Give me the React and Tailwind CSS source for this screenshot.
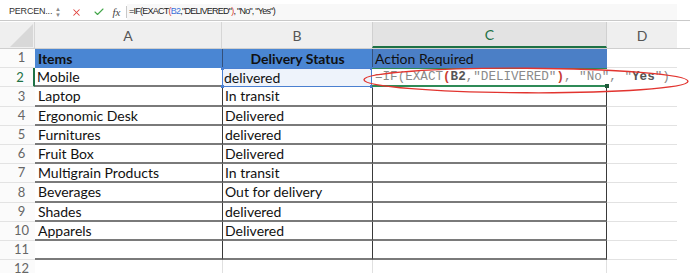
import React from "react";
import { X, Check } from "lucide-react";

const data = [
  ["Laptop", "In transit"],
  ["Ergonomic Desk", "Delivered"],
  ["Furnitures", "delivered"],
  ["Fruit Box", "Delivered"],
  ["Multigrain Products", "In transit"],
  ["Beverages", "Out for delivery"],
  ["Shades", "delivered"],
  ["Apparels", "Delivered"],
  ["", ""],
];

function RowNum({ n, active }) {
  return (
    <div
      className={
        active
          ? "w-[35px] shrink-0 h-full flex items-center justify-center pl-[7px] text-[13px] text-[#1e7145] border-r-2 border-r-[#1e7145] border-b border-b-[#e3e3e3] bg-[#fbfbfb]"
          : "w-[35px] shrink-0 h-full flex items-center justify-center pl-[8px] text-[13px] text-[#666] border-b border-b-[#e3e3e3] bg-[#fbfbfb]"
      }
    >
      {n}
    </div>
  );
}

function FormulaBar() {
  return (
    <div className="flex items-center h-[16px] bg-white font-['Liberation_Sans',sans-serif]">
      <div className="w-[62px] shrink-0 flex items-center pl-[9px] h-full">
        <span className="text-[9px] text-[#333] tracking-[-0.2px]">PERCEN...</span>
        <div className="ml-auto mr-[1px] flex flex-col items-center leading-none text-[#8a8a8a]">
          <span className="text-[6px] leading-[6px]">▲</span>
          <span className="text-[6px] leading-[6px]">▼</span>
        </div>
      </div>
      <div className="w-[28px] flex justify-center">
        <X size={11} strokeWidth={2.2} color="#e0413d" />
      </div>
      <div className="w-[18px] flex justify-center">
        <Check size={12} strokeWidth={2.2} color="#43a64a" />
      </div>
      <div className="w-[17px] flex justify-center">
        <span className="font-['Liberation_Serif',serif] italic text-[11px] text-[#444]">fx</span>
      </div>
      <div className="w-px h-[12px] bg-[#c8c8c8] ml-[1px]" />
      <div className="flex-1 h-full flex items-center pl-[2px] bg-[#f8f8f8] mr-[13px]">
        <span className="text-[9px] tracking-[-0.75px] text-[#222] whitespace-nowrap">
          =IF(EXACT<span className="text-[#d9412f]">(</span>
          <span className="text-[#3a6fd8]">B2</span>,"DELIVERED"
          <span className="text-[#d9412f]">)</span>, "No", "Yes")
        </span>
      </div>
    </div>
  );
}

function HeaderRow() {
  return (
    <div className="flex h-[27px] border-b border-b-[#cfcfcf] text-[14px] text-[#555]">
      <div className="w-[35px] shrink-0 h-full bg-[#efefef] border-r border-r-[#d6d6d6] relative">
        <svg className="absolute right-[1px] bottom-[1px]" width="23" height="23" viewBox="0 0 23 23">
          <polygon points="23,0 23,23 0,23" fill="#d8d8d8" />
        </svg>
      </div>
      <div className="w-[187px] shrink-0 bg-[#efefef] flex items-center justify-center border-r border-r-[#d6d6d6]">A</div>
      <div className="w-[150px] shrink-0 bg-[#efefef] flex items-center justify-center">B</div>
      <div className="w-[235px] shrink-0 bg-[#e3e3e3] flex items-center justify-center text-[#1e7145] border-b-2 border-b-[#1e7145] border-l border-l-[#d0d0d0] border-r border-r-[#d0d0d0]">C</div>
      <div className="w-[70px] shrink-0 bg-[#efefef] flex items-center justify-center">D</div>
      <div className="flex-1 bg-white" />
    </div>
  );
}

export default function App() {
  return (
    <div className="w-[690px] h-[273px] overflow-hidden bg-white relative font-['Lato',sans-serif]">
      <div className="h-[4px] bg-white" />
      <FormulaBar />
      <div className="h-px bg-[#c9c9c9]" />
      <div className="h-px bg-white" />
      <HeaderRow />

      {/* Row 1 */}
      <div className="flex h-[19.2px] text-[14px] text-[#111]">
        <RowNum n={1} />
        <div className="w-[187px] shrink-0 bg-[#4a86d3] flex items-center pl-[3px] font-bold">Items</div>
        <div className="w-[150px] shrink-0 bg-[#4a86d3] border-l border-l-[#34507a] flex items-center justify-center font-bold">Delivery Status</div>
        <div className="w-[235px] shrink-0 bg-[#4b7fc6] border-l border-l-[#34507a] flex items-center pl-[2px]">Action Required</div>
        <div className="w-[70px] shrink-0 border-b border-b-[#e2e2e2]" />
      </div>

      {/* Row 2 */}
      <div className="flex h-[19.2px] text-[14px] text-[#111]">
        <RowNum n={2} active />
        <div className="w-[187px] shrink-0 border-b-2 border-b-[#7a7a7a] flex items-center pl-[2px]">Mobile</div>
        <div className="w-[150px] shrink-0 border border-[#4a7fd0] bg-[#eef3fb] flex items-center pl-[1px] relative">
          delivered
          <span className="absolute left-[-2px] top-[-2px] w-[3px] h-[3px] bg-[#4a7fd0]" />
          <span className="absolute right-[-2px] top-[-2px] w-[3px] h-[3px] bg-[#4a7fd0]" />
          <span className="absolute left-[-2px] bottom-[-2px] w-[3px] h-[3px] bg-[#4a7fd0]" />
          <span className="absolute right-[-2px] bottom-[-2px] w-[3px] h-[3px] bg-[#4a7fd0]" />
        </div>
        <div className="w-[235px] shrink-0 border-t border-t-[#2f8a57] border-b-2 border-b-[#2f8a57] flex items-center pl-[3px] relative z-10 bg-white">
          <span className="font-['Liberation_Mono',monospace] text-[12.6px] whitespace-nowrap text-[#8a8a8a]">
            =IF(EXACT<b className="text-[#c93a32]">(</b>
            <b className="text-[#555]">B2</b>,"DELIVERED"
            <b className="text-[#c93a32]">)</b>, "No", "<b className="text-[#555]">Yes</b>")
          </span>
          <span className="absolute right-[-2px] bottom-[-3px] w-[4px] h-[4px] bg-[#1e5a3a]" />
        </div>
        <div className="w-[70px] shrink-0" />
      </div>

      {/* Rows 3-11 */}
      {data.map((r, i) => (
        <div key={i} className="flex h-[19.2px] text-[14px] text-[#111]">
          <RowNum n={i + 3} />
          <div className="w-[187px] shrink-0 border-b-2 border-b-[#7a7a7a] flex items-center pl-[3px] whitespace-nowrap">{r[0]}</div>
          <div className="w-[150px] shrink-0 border-l border-l-[#3a3a3a] border-b-2 border-b-[#7a7a7a] flex items-center pl-[2px] whitespace-nowrap">{r[1]}</div>
          <div className="w-[235px] shrink-0 border-l border-l-[#3a3a3a] border-r border-r-[#3a3a3a] border-b-2 border-b-[#7a7a7a]" />
          <div className="w-[70px] shrink-0 border-b border-b-[#e2e2e2]" />
        </div>
      ))}

      {/* Row 12 */}
      <div className="flex h-[19.2px] text-[14px] text-[#111]">
        <RowNum n={12} />
        <div className="w-[187px] shrink-0 border-b border-b-[#e2e2e2]" />
        <div className="w-[150px] shrink-0 border-l border-l-[#e0e0e0] border-b border-b-[#e2e2e2]" />
        <div className="w-[235px] shrink-0 border-l border-l-[#e0e0e0] border-r border-r-[#e0e0e0] border-b border-b-[#e2e2e2]" />
        <div className="w-[70px] shrink-0 border-b border-b-[#e2e2e2]" />
      </div>

      <svg className="absolute left-0 top-0 pointer-events-none z-20" width="690" height="273">
        <ellipse cx="526" cy="80.5" rx="162" ry="12.3" fill="none" stroke="#e2342f" strokeWidth="1.4" transform="rotate(0.3 526 80.5)" />
      </svg>
    </div>
  );
}
